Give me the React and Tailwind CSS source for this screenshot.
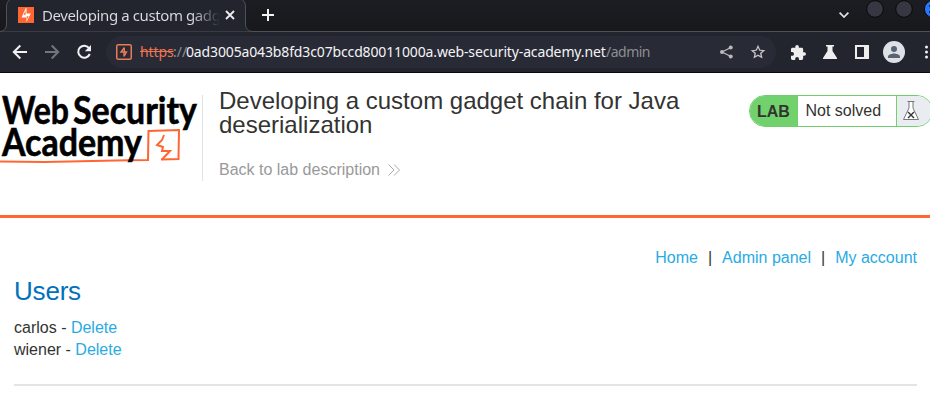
function TabStrip() {
  return (
    <div className="relative flex h-8 bg-linear-to-b from-[#1c1d22] to-[#17181c]">
      <svg className="absolute left-0 top-0 h-8 w-[930px]" viewBox="0 0 930 32" fill="none">
        <path d="M0 32 V31.5 Q6.5 31 6.5 24 V7 Q6.5 0 12 -1 H240 Q245.500 0 245.500 7 V24 Q245.500 31.500 253 31.500 H930 V32 Z" fill="#23252e" stroke="#505157" />
      </svg>
      <div className="relative flex h-[30px] w-[246px] shrink-0 items-center pl-[18px]">
        <svg className="h-4 w-4 shrink-0" viewBox="0 0 16 16">
          <path fill="#ff6633" d="M0 0h16v16H0z" />
          <path fill="#fff" d="M8.500 1v5.500h4.300L8.500 15V10.500H3.500L7.800 1Z" />
          <path fill="#ff6633" d="M7.600 3.500v4.200H5.600ZM8.800 9.200h1.900L8.800 12.800Z" />
        </svg>
        <span className="ml-2 w-[178px] overflow-hidden whitespace-nowrap bg-linear-to-r from-[#dcdde0] from-84% to-transparent bg-clip-text text-[15px] leading-6 tracking-[-0.4px] text-transparent">
          Developing a custom gadget chain
        </span>
        <svg className="ml-[5px] h-[10px] w-[10px] shrink-0" viewBox="0 0 10 10" fill="none" stroke="#eeeeee" strokeWidth="1.8">
          <path d="M1 1l8 8M9 1L1 9" />
        </svg>
      </div>
      <svg className="relative ml-4 mt-[9px] h-3 w-3" viewBox="0 0 12 12" stroke="#f3f3f3" strokeWidth="2">
        <path d="M6 0v12M0 6h12" />
      </svg>
      <svg className="relative ml-auto mt-3 h-[6px] w-[10px]" viewBox="0 0 10 6" fill="none" stroke="#e4e4e4" strokeWidth="1.700">
        <path d="M.6 .6L5 5 9.400 .6" />
      </svg>
      <svg className="relative ml-4 h-5 w-[65px]" viewBox="0 0 65 20">
        <circle cx="10" cy="9" r="8.300" fill="#353842" stroke="#08090b" />
        <circle cx="39" cy="9" r="8.300" fill="#353842" stroke="#08090b" />
        <circle cx="68" cy="9" r="8.600" fill="#2777ff" stroke="#08090b" />
        <path d="M64 5h2v2h-2zM64 11h2v2h-2z" fill="#123064" />
      </svg>
    </div>
  );
}

function Toolbar() {
  return (
    <div className="flex h-[41px] items-center border-b border-[#08090c] bg-[#23252e]">
      <svg className="ml-3 h-4 w-[82px] shrink-0" viewBox="0 0 82 16" fill="none" strokeWidth="2">
        <path d="M15 8H2M8.300 1.500L1.800 8l6.500 6.500" stroke="#f1f1f1" />
        <path d="M33 8h13M39.700 1.500L46.200 8l-6.500 6.500" stroke="#73757d" />
        <path d="M77.200 4.300A6 6 0 1 0 77.800 10" stroke="#f1f1f1" />
        <path d="M79 1v6.200h-6.200Z" fill="#f1f1f1" />
      </svg>
      <div className="ml-3 flex h-8 w-[670px] shrink-0 items-center rounded-full bg-[#282a35] pl-[10px] pr-[10px] text-[14px]">
        <svg className="h-4 w-4 shrink-0" viewBox="0 0 16 16" fill="none" stroke="#e97c54">
          <rect x=".75" y=".75" width="14.500" height="14.500" rx="1.500" strokeWidth="1.500" />
          <path d="M8.500 3.500L5 8h5.500L8 12.500M8.300 4v3.500M8 8.500v4" strokeWidth="1.400" />
        </svg>
        <div className="ml-2 flex items-center whitespace-nowrap leading-5">
          <span className="w-[33px] tracking-[-0.1px] text-[#ed7452] line-through">https</span>
          <span className="w-[13px] text-[#8c8e94]">://</span>
          <span className="w-[420px] tracking-[-0.14px] text-[#f4f4f5]">0ad3005a043b8fd3c07bccd80011000a.web-security-academy.net</span>
          <span className="tracking-[-0.5px] text-[#8c8e94]">/admin</span>
        </div>
        <svg className="ml-auto h-[14px] w-[13px] shrink-0" viewBox="0 0 13 14" fill="#b9babd">
          <path d="M11 2.500L2 7l9 4.500" fill="none" stroke="#b9babd" strokeWidth="1.300" />
          <circle cx="10.700" cy="2.500" r="2" /><circle cx="2" cy="7" r="2" /><circle cx="10.700" cy="11.500" r="2" />
        </svg>
        <svg className="ml-[17px] h-4 w-4 shrink-0" viewBox="0 0 24 24" fill="#c4c5c8">
          <path d="M23 9.200l-7.700-.7L12 1.300 8.700 8.500 1 9.200l5.800 5.100-1.700 7.600 6.900-4 6.900 4-1.700-7.600L23 9.200zM12 15.700l-4 2.400 1-4.600-3.500-3.100 4.600-.4L12 5.700l1.900 4.300 4.600.4-3.500 3.100 1 4.600-4-2.400z" />
        </svg>
      </div>
      <svg className="ml-[15px] h-[15px] w-[15px] shrink-0" viewBox="2 1 21 21" fill="#eeeeee">
        <path d="M20.500 11H19V7c0-1.100-.9-2-2-2h-4V3.500a2.500 2.500 0 0 0-5 0V5H4c-1.100 0-2 .9-2 2v3.800h1.500a2.700 2.700 0 0 1 0 5.400H2V20c0 1.100.9 2 2 2h3.800v-1.500a2.700 2.700 0 0 1 5.400 0V22H17c1.100 0 2-.9 2-2v-4h1.500a2.500 2.500 0 0 0 0-5z" />
      </svg>
      <svg className="ml-[17px] h-[14px] w-[14px] shrink-0" viewBox="0 0 14 14" fill="#eeeeee">
        <path d="M3 0h8v1.500H9.500V6L14 13v1H0v-1l4.500-7V1.500H3Z" />
      </svg>
      <svg className="ml-[18px] h-[14px] w-[14px] shrink-0" viewBox="0 0 14 14">
        <path fill="#eeeeee" fillRule="evenodd" d="M0 0h14v14H0zM2 2v10h7V2z" />
      </svg>
      <svg className="ml-[14px] h-[22px] w-[22px] shrink-0" viewBox="0 0 22 22">
        <circle cx="11" cy="11" r="11" fill="#dde1e6" />
        <circle cx="11" cy="8" r="3" fill="#596273" />
        <path d="M5 17v-1.500C5 13.500 9 12.500 11 12.500s6 1 6 3V17Z" fill="#596273" />
      </svg>
      <svg className="ml-[19px] h-4 w-[6px] shrink-0" viewBox="0 0 6 16" fill="#f1f1f1">
        <circle cx="2.500" cy="3" r="1.500" /><circle cx="2.500" cy="8" r="1.500" /><circle cx="2.500" cy="13" r="1.500" />
      </svg>
    </div>
  );
}

function AcademyLogo() {
  return (
    <svg className="h-[86px] w-[202px] shrink-0" viewBox="0 0 202 86" fill="none">
      <g stroke="#ff6633" strokeWidth="2">
        <path d="M0 66.500 L45 67 L128 65.300 L148 65 L148.500 36 L179 35 L178.500 64 L161 64.500" />
        <path d="M164 40 L162 45 L157 50 L163 52 L162 56 H170 L162 64.500" />
      </g>
      <g fill="#000" stroke="#000" strokeWidth=".6" fontFamily="Lato, sans-serif" fontSize="38" fontWeight="700">
        <text x="2" y="29" textLength="67" lengthAdjust="spacingAndGlyphs">Web</text>
        <text x="73" y="29" textLength="124" lengthAdjust="spacingAndGlyphs">Security</text>
        <text x="2" y="61" textLength="140" lengthAdjust="spacingAndGlyphs">Academy</text>
      </g>
    </svg>
  );
}

function LabStatus() {
  return (
    <div className="ml-auto mr-[-3px] flex h-8 w-[184px] overflow-hidden rounded-full border border-[#70cf6b] bg-white">
      <span className="flex w-12 shrink-0 items-center bg-[#71d16c] pl-[7px] pt-px text-base font-bold">LAB</span>
      <span className="flex w-[98px] shrink-0 items-center pl-[7.5px] text-base">Not solved</span>
      <span className="flex flex-1 items-center border-l border-[#71d16c] bg-[#e9edf1] pl-[6px]">
        <svg className="h-5 w-4" viewBox="0 0 16 20" fill="#fff" stroke="#777">
          <path d="M4.500 .5h7M6 .5V7L.5 18.500h15L10 7V.5" />
          <path d="M5 11l6 6M11 11l-6 6" stroke="#333" strokeWidth="1.400" />
        </svg>
      </span>
    </div>
  );
}

function LabHeader() {
  return (
    <header className="flex h-[145px] items-start border-b-[3px] border-[#ff6633] pt-[22px]">
      <AcademyLogo />
      <div className="flex h-[86px] w-[520px] flex-col border-l border-[#e2e3e5] pl-4">
        <h1 className="mt-[-6px] text-2xl leading-6">Developing a custom gadget chain for Java deserialization</h1>
        <a className="mt-[21px] flex items-center text-base leading-6 text-[#999999]">
          Back to lab description
          <svg className="ml-2 h-3 w-3" viewBox="0 0 12 12" fill="none" stroke="#aaa">
            <path d="M.5 .5L6 6 .5 11.500M6 .5L11.500 6 6 11.500" />
          </svg>
        </a>
      </div>
      <LabStatus />
    </header>
  );
}

const users = ["carlos", "wiener"];

export default function App() {
  return (
    <div className="h-[401px] w-[930px] overflow-hidden bg-white font-['Liberation_Sans',Arial,sans-serif] text-[#333332]">
      <div className="font-['Noto_Sans',sans-serif]">
        <TabStrip />
        <Toolbar />
      </div>
      <LabHeader />
      <main className="ml-[14px] mr-[13px] pt-7">
        <nav className="flex justify-end text-base leading-6 text-[#29abe2]">
          <a>Home</a>
          <span className="mx-[10px] text-[#333332]">|</span>
          <a>Admin panel</a>
          <span className="mx-[10px] text-[#333332]">|</span>
          <a>My account</a>
        </nav>
        <section className="h-[116px] border-b-2 border-[#e4e4e4] pt-[5px]">
          <h2 className="text-[26px] leading-8 tracking-[-0.2px] text-[#0071bc]">Users</h2>
          <div className="mt-[10px] text-base leading-[22px]">
            {users.map((name) => (
              <div key={name}>{name} - <a className="text-[#29abe2]">Delete</a></div>
            ))}
          </div>
        </section>
      </main>
    </div>
  );
}
